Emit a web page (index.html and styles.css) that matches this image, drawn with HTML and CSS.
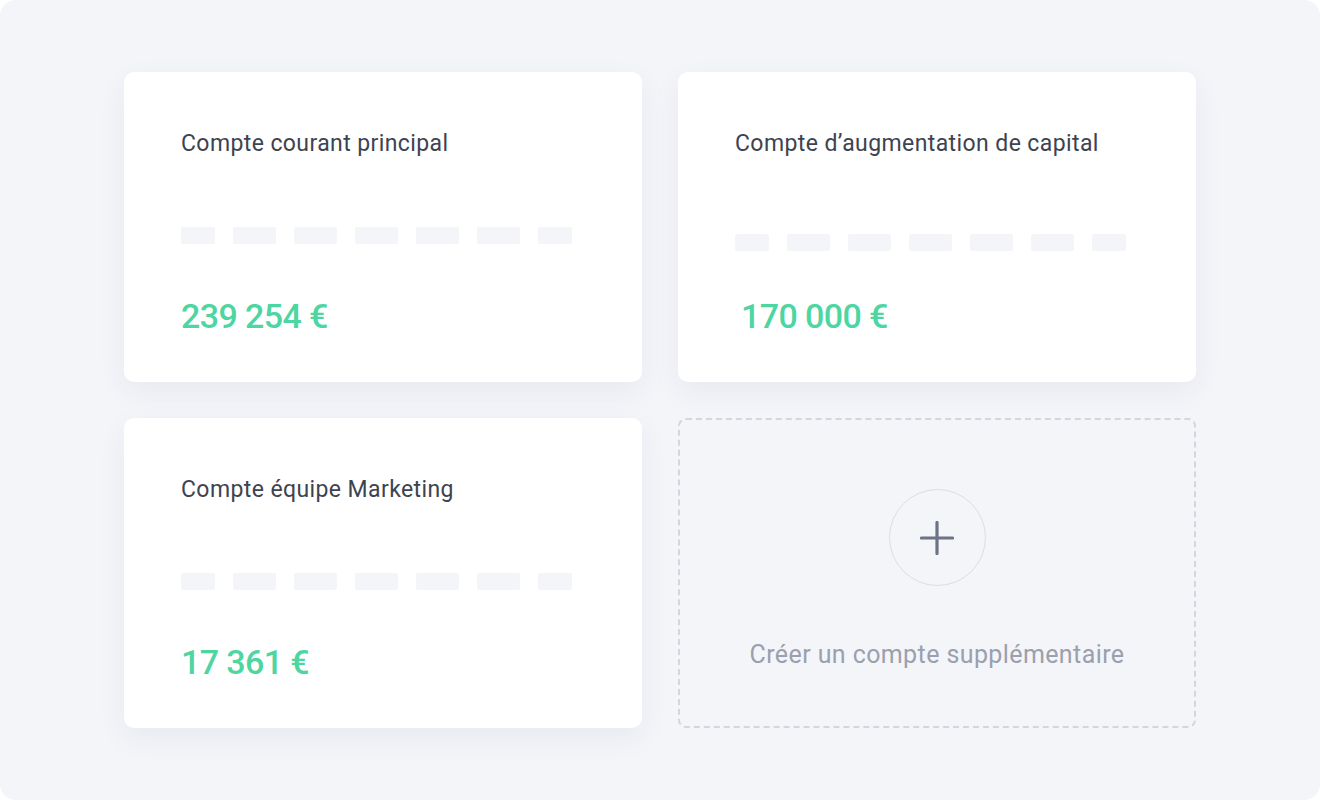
FILE: index.html
```html
<!DOCTYPE html>
<html lang="fr">
<head>
<meta charset="utf-8">
<title>Comptes</title>
<link rel="stylesheet" href="styles.css">
</head>
<body>
<div class="page">
  <div class="grid">
    <div class="card">
      <div class="title">Compte courant principal</div>
      <div class="bars"><span class="bar s"></span><span class="bar"></span><span class="bar"></span><span class="bar"></span><span class="bar"></span><span class="bar"></span><span class="bar s"></span></div>
      <div class="amount">239 254 €</div>
    </div>
    <div class="card">
      <div class="title">Compte d’augmentation de capital</div>
      <div class="bars low"><span class="bar s"></span><span class="bar"></span><span class="bar"></span><span class="bar"></span><span class="bar"></span><span class="bar"></span><span class="bar s"></span></div>
      <div class="amount shift">170 000 €</div>
    </div>
    <div class="card">
      <div class="title">Compte équipe Marketing</div>
      <div class="bars"><span class="bar s"></span><span class="bar"></span><span class="bar"></span><span class="bar"></span><span class="bar"></span><span class="bar"></span><span class="bar s"></span></div>
      <div class="amount">17 361 €</div>
    </div>
    <div class="add">
      <div class="circle">
        <svg width="34" height="34" viewBox="0 0 34 34"><path d="M17 1.5V32.5M1.5 17H32.5" stroke="#6b7385" stroke-width="3.2" stroke-linecap="round" fill="none"/></svg>
      </div>
      <div class="add-label">Créer un compte supplémentaire</div>
    </div>
  </div>
</div>
</body>
</html>
```

FILE: styles.css
```css
html, body {
  margin: 0;
  padding: 0;
  background: #ffffff;
}

body {
  font-family: Roboto, "Noto Sans", sans-serif;
}

.page {
  width: 1320px;
  height: 800px;
  background: #f4f5f9;
  border-radius: 16px;
  box-sizing: border-box;
  padding-top: 72px;
}

.grid {
  display: grid;
  grid-template-columns: 518px 518px;
  grid-auto-rows: 310px;
  gap: 36px;
  justify-content: center;
}

.card {
  background: #ffffff;
  border-radius: 10px;
  box-shadow: 0 10px 30px rgba(40, 50, 80, 0.06);
  padding: 0 57px;
  display: flex;
  flex-direction: column;
}

.title {
  margin-top: 58px;
  font-size: 23px;
  line-height: 28px;
  letter-spacing: 0.4px;
  color: #3d4350;
  white-space: nowrap;
}

.bars {
  display: flex;
  gap: 18px;
  margin-top: 69px;
}

.bars.low {
  margin-top: 76px;
}

.bar {
  display: block;
  width: 43px;
  height: 17px;
  border-radius: 2px;
  background: #f4f5f9;
}

.bar.s {
  width: 34px;
}

.amount {
  margin-top: 52px;
  font-size: 34px;
  font-weight: 500;
  line-height: 40px;
  color: #4dd6a1;
  letter-spacing: -0.6px;
  white-space: nowrap;
}

.shift {
  margin-top: 45px;
  margin-left: 6px;
}

.add {
  border: 2px dashed #d3d6dc;
  border-radius: 8px;
  box-sizing: border-box;
  display: flex;
  flex-direction: column;
  align-items: center;
}

.circle {
  margin-top: 69px;
  width: 97px;
  height: 97px;
  box-sizing: border-box;
  border: 1.5px solid #dcdde1;
  border-radius: 50%;
  display: flex;
  align-items: center;
  justify-content: center;
}

.add-label {
  margin-top: 54px;
  font-size: 25px;
  line-height: 30px;
  letter-spacing: 0.4px;
  color: #9aa0ad;
  white-space: nowrap;
}
```
